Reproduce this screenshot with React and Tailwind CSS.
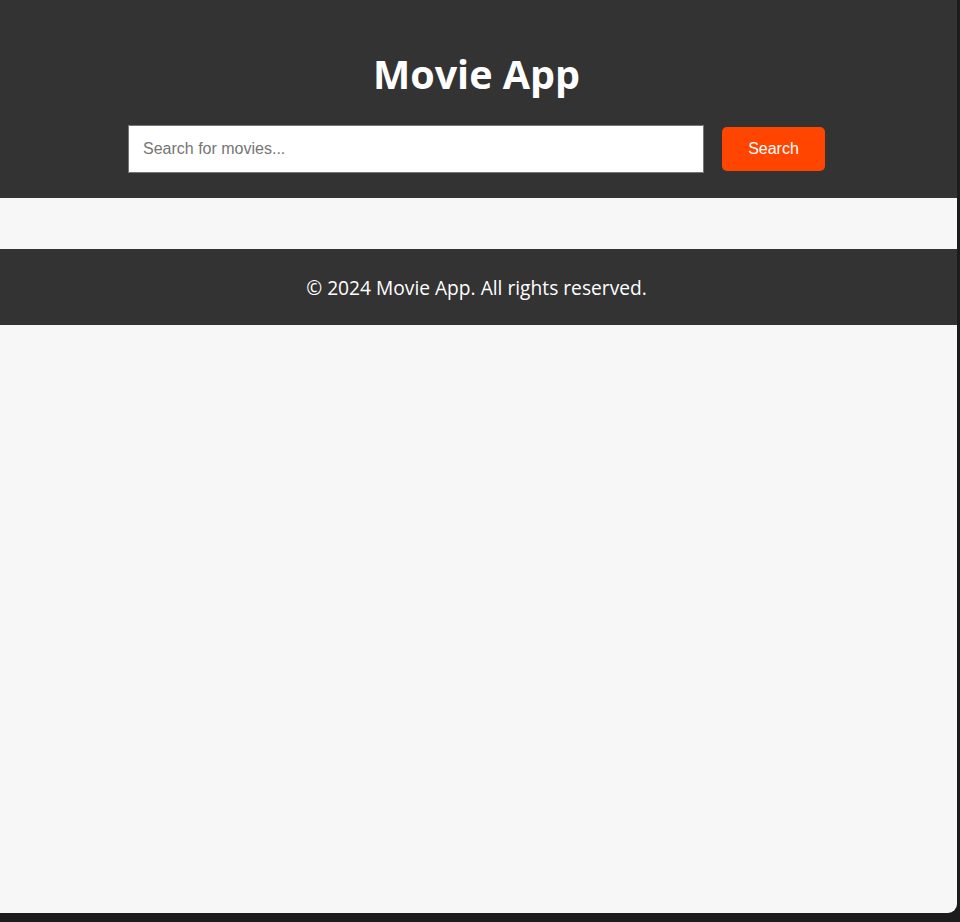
import { useState } from 'react';

const App = () => {
    const [query, setQuery] = useState('');

    return (
        <div className="h-[922px] w-[960px] bg-[#1c1c1c] font-['Open_Sans',sans-serif]">
            <div className="flex h-[913px] w-[957px] flex-col overflow-hidden rounded-br-[9px] bg-[#f7f7f7]">
                {/* Header */}
                <header className="flex h-[198px] flex-col items-center bg-[#333333] pr-[4px] pt-[49px] text-white">
                    <h1 className="text-[39.5px] font-bold leading-[50px]">Movie App</h1>
                    <form
                        onSubmit={(e) => e.preventDefault()}
                        className="mt-[26px] flex items-center gap-[18px]"
                    >
                        <input
                            type="text"
                            value={query}
                            onChange={(e) => setQuery(e.target.value)}
                            placeholder="Search for movies..."
                            className="h-[48px] w-[576px] border border-[#767676] bg-white px-[14px] font-['Liberation_Sans',sans-serif] text-[16px] text-[#333] outline-none placeholder:text-[#757575]"
                        />
                        <button
                            type="submit"
                            className="h-[44px] w-[103px] rounded-[5px] bg-[#ff4500] font-['Liberation_Sans',sans-serif] text-[16px] text-white"
                        >
                            Search
                        </button>
                    </form>
                </header>

                {/* Movie list */}
                <main className="h-[51px]" />

                <footer className="flex h-[76px] items-center justify-center bg-[#333333] pr-[4px] pt-[3px] text-white">
                    <p className="text-[19.2px]">© 2024 Movie App. All rights reserved.</p>
                </footer>
            </div>
        </div>
    );
};

export default App;
